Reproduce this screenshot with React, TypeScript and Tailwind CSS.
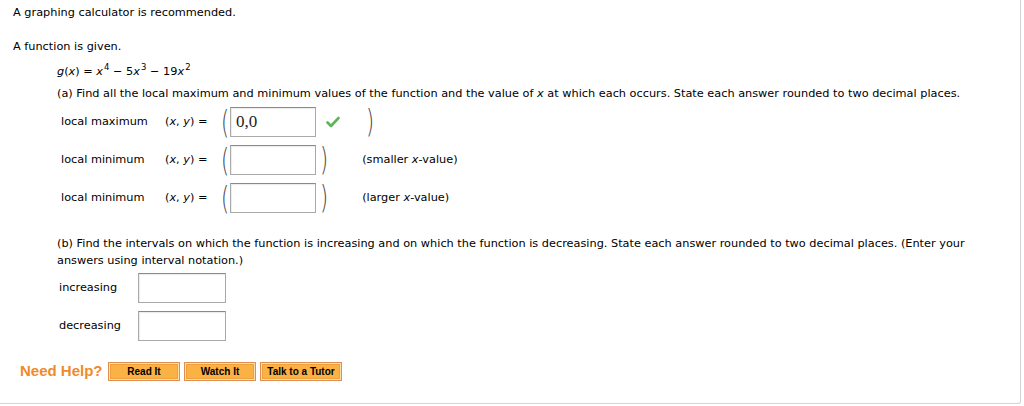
import React from "react";

const Paren = ({ children }: { children: string }) => (
  <span className="inline-block font-['DejaVu_Sans'] font-extralight text-[26px] leading-none text-[#444] scale-x-[0.8] scale-y-[1.2]">
    {children}
  </span>
);

const Check = () => (
  <svg width="14" height="12" viewBox="0 0 14 12" className="shrink-0">
    <path d="M1.5 6.5 L5 10 L12.5 2" fill="none" stroke="#5fb35a" strokeWidth="2.6" strokeLinecap="round" strokeLinejoin="round" />
  </svg>
);

const Box = ({ value, w = "w-[86px]" }: { value?: string; w?: string }) => (
  <div className={`${w} h-[30px] border border-[#a9a9a9] border-t-[#8a8a8a] bg-white shadow-[inset_1px_1px_1px_rgba(0,0,0,0.08)] flex items-center px-[5px] font-['Liberation_Serif',serif] text-[17px] text-[#222]`}>
    {value}
  </div>
);

const Sup = ({ children }: { children: string }) => (
  <sup className="text-[8.5px] relative -top-[5px] ml-[1px]">{children}</sup>
);

function PointRow({ label, value, note, mt }: { label: string; value?: string; note?: React.ReactNode; mt: string }) {
  return (
    <div className={`flex items-center h-[30px] ${mt}`}>
      <span className="w-[108px] pl-[4px]">{label}</span>
      <span className="w-[56px]">
        (<i>x</i>, <i>y</i>) =
      </span>
      <span className="w-[9px] flex justify-center">
        <Paren>(</Paren>
      </span>
      <Box value={value} />
      {value ? (
        <>
          <span className="ml-[10px]"><Check /></span>
          <span className="ml-[25px]"><Paren>)</Paren></span>
        </>
      ) : (
        <span className="ml-[3px]"><Paren>)</Paren></span>
      )}
      {note && <span className="ml-[33px]">{note}</span>}
    </div>
  );
}

function HelpButton({ label, w }: { label: string; w: string }) {
  return (
    <button
      type="button"
      className={`${w} h-[19px] border border-[#df8f50] bg-[#fbb244] shadow-[inset_0_0_0_1px_#fde0b0,inset_0_0_0_2px_#f0a03c] flex items-center justify-center font-['Liberation_Sans',Arial,sans-serif] font-bold text-[10px] text-black`}
    >
      {label}
    </button>
  );
}

export default function App() {
  return (
    <div className="w-[1021px] h-[404px] bg-white border-r border-b border-[#d4d4d4] rounded-br-[3px] font-['DejaVu_Sans',Verdana,sans-serif] text-[11.3px] text-black">
      <div className="pl-[13px]">
        <div className="h-[26px] flex items-center">A graphing calculator is recommended.</div>
        <div className="mt-[8px] h-[26px] flex items-center">A function is given.</div>

        <div className="pl-[44px]">
          <div className="mt-[2px] h-[20px] flex items-center">
            <span>
              <i>g</i>(<i>x</i>) = <i>x</i>
              <Sup>4</Sup> − 5<i>x</i>
              <Sup>3</Sup> − 19<i>x</i>
              <Sup>2</Sup>
            </span>
          </div>
          <div className="mt-[2px] h-[20px] flex items-center">
            (a) Find all the local maximum and minimum values of the function and the value of&nbsp;<i>x</i>&nbsp;at which each occurs. State each answer rounded to two decimal places.
          </div>

          <PointRow label="local maximum" value="0,0" mt="mt-[3px]" />
          <PointRow
            label="local minimum"
            mt="mt-[8px]"
            note={
              <>
                (smaller <i>x</i>-value)
              </>
            }
          />
          <PointRow
            label="local minimum"
            mt="mt-[8px]"
            note={
              <>
                (larger <i>x</i>-value)
              </>
            }
          />

          <p className="mt-[22px] leading-[17px] pr-[40px]">
            (b) Find the intervals on which the function is increasing and on which the function is decreasing. State each answer rounded to two decimal places. (Enter your answers using interval notation.)
          </p>

          <div className="mt-[4px] flex items-center h-[30px]">
            <span className="w-[81px] pl-[2px]">increasing</span>
            <Box w="w-[88px]" />
          </div>
          <div className="mt-[8px] flex items-center h-[30px]">
            <span className="w-[81px] pl-[2px]">decreasing</span>
            <Box w="w-[88px]" />
          </div>
        </div>
      </div>

      <div className="mt-[21px] pl-[20px] flex items-center h-[19px]">
        <span className="w-[88px] font-['Liberation_Sans',Arial,sans-serif] font-bold text-[15px] text-[#f08a2a]">Need Help?</span>
        <div className="flex gap-[4px]">
          <HelpButton label="Read It" w="w-[72px]" />
          <HelpButton label="Watch It" w="w-[72px]" />
          <HelpButton label="Talk to a Tutor" w="w-[82px]" />
        </div>
      </div>
    </div>
  );
}
